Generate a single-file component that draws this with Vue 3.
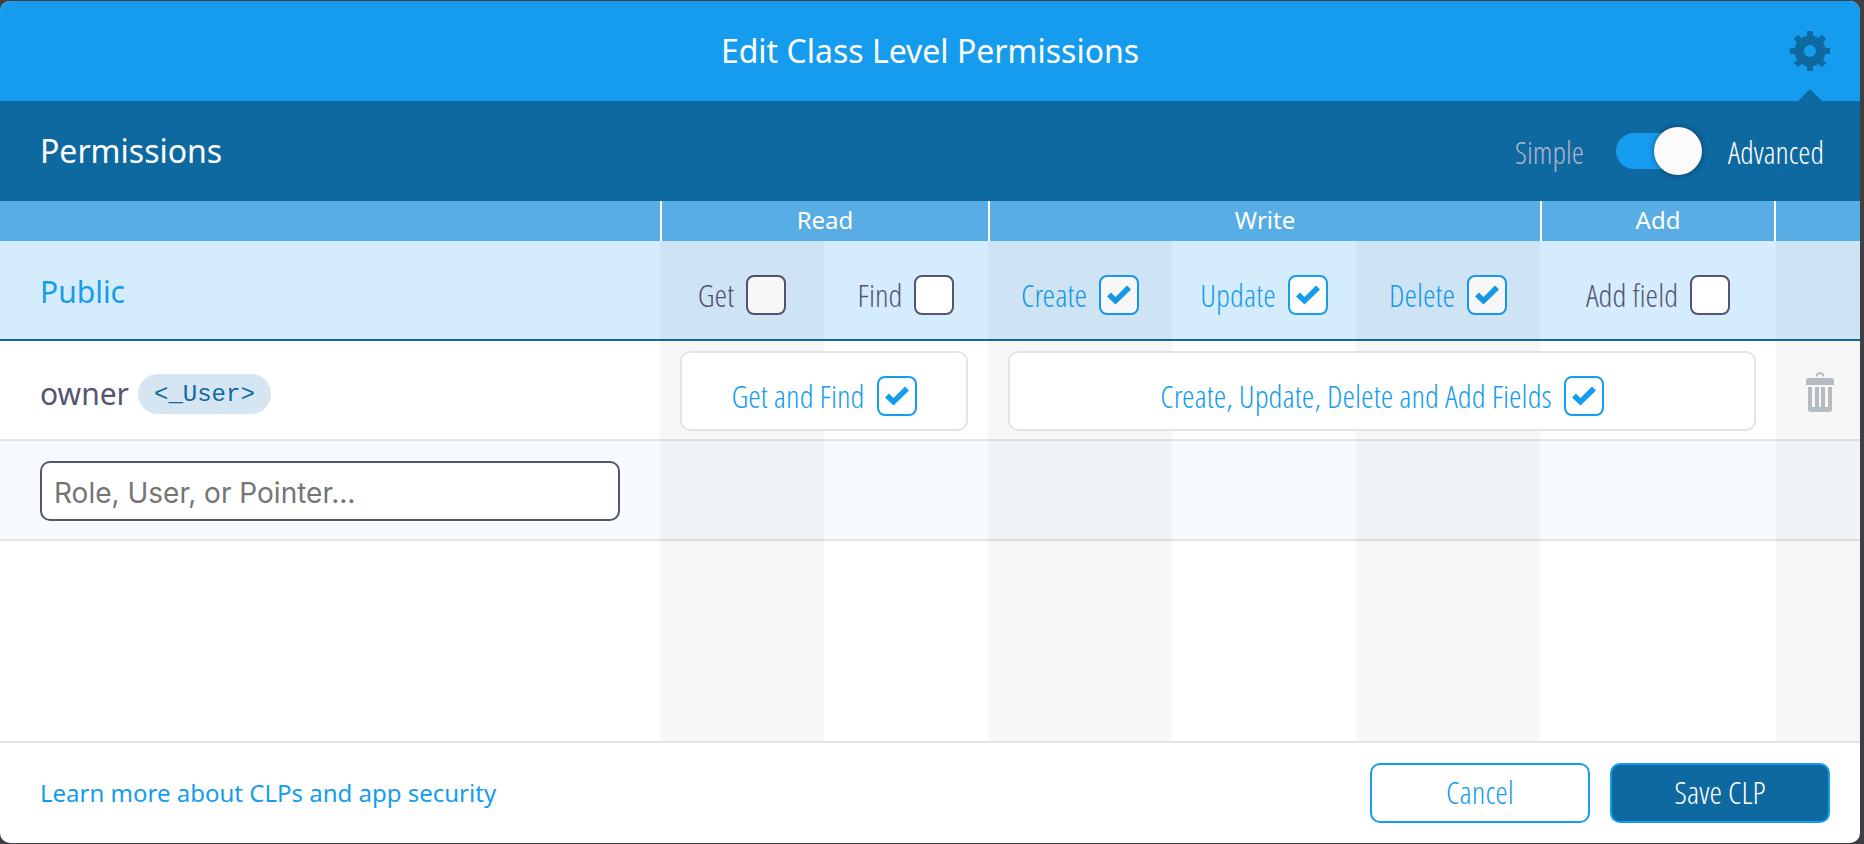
<script setup>
import { ref, reactive } from 'vue'

const advanced = ref(true)
const entry = ref('')
const publicPerms = reactive([
  { id: 'get', label: 'Get', on: false },
  { id: 'find', label: 'Find', on: false },
  { id: 'create', label: 'Create', on: true },
  { id: 'update', label: 'Update', on: true },
  { id: 'delete', label: 'Delete', on: true },
  { id: 'addField', label: 'Add field', on: false }
])
const pointerPerms = reactive([
  { id: 'read', label: 'Get and Find', span: 2, on: true },
  { id: 'write', label: 'Create, Update, Delete and Add Fields', span: 4, on: true }
])
</script>

<template>
  <div class="backdrop">
    <main class="modal" role="dialog" aria-labelledby="title">
      <header class="header">
        <h1 id="title">Edit Class Level Permissions</h1>
        <button class="gear" type="button" aria-label="Settings">
          <svg viewBox="0 0 40 40" width="40" height="40" aria-hidden="true">
            <g fill="#0e69a1">
              <rect x="17" y="0" width="6" height="40" />
              <rect x="17" y="0" width="6" height="40" transform="rotate(45 20 20)" />
              <rect x="17" y="0" width="6" height="40" transform="rotate(90 20 20)" />
              <rect x="17" y="0" width="6" height="40" transform="rotate(135 20 20)" />
              <circle cx="20" cy="20" r="15.5" />
            </g>
            <circle cx="20" cy="20" r="6" fill="#169cee" />
          </svg>
        </button>
      </header>

      <section class="settings">
        <h2>Permissions</h2>
        <label class="mode">
          <span class="simple">Simple</span>
          <input v-model="advanced" class="toggle" type="checkbox" role="switch" />
          <span>Advanced</span>
        </label>
      </section>

      <section class="body">
        <table>
          <colgroup>
            <col />
            <col class="narrow" span="2" />
            <col class="medium" span="3" />
            <col class="wide" />
            <col class="last" />
          </colgroup>
          <thead>
            <tr>
              <td></td>
              <th colspan="2" scope="colgroup">Read</th>
              <th colspan="3" scope="colgroup">Write</th>
              <th class="add" scope="col">Add</th>
              <td></td>
            </tr>
          </thead>
          <tbody>
            <tr class="public">
              <th scope="row">Public</th>
              <td v-for="p in publicPerms" :key="p.id">
                <label class="perm" :class="{ on: p.on }">
                  <span>{{ p.label }}</span>
                  <span class="box">
                    <input v-model="p.on" type="checkbox" />
                    <svg v-if="p.on" viewBox="0 0 40 40" aria-hidden="true"><path d="M8 21.500 12 17.500 16.500 22 28 10.500 32 14.500 16.500 29.500Z" /></svg>
                  </span>
                </label>
              </td>
              <td></td>
            </tr>
            <tr class="pointer">
              <th scope="row"><span class="owner">owner <code>&lt;_User&gt;</code></span></th>
              <td v-for="p in pointerPerms" :key="p.id" :colspan="p.span">
                <label class="perm group" :class="{ on: p.on }">
                  <span>{{ p.label }}</span>
                  <span class="box">
                    <input v-model="p.on" type="checkbox" />
                    <svg v-if="p.on" viewBox="0 0 40 40" aria-hidden="true"><path d="M8 21.500 12 17.500 16.500 22 28 10.500 32 14.500 16.500 29.500Z" /></svg>
                  </span>
                </label>
              </td>
              <td>
                <button class="trash" type="button" aria-label="Delete owner">
                  <svg viewBox="0 0 28 40" width="28" height="40" aria-hidden="true">
                    <path d="M10.500 4.500a3.500 3.500 0 0 1 7 0" fill="none" stroke="#bcc2c9" stroke-width="2" />
                    <path d="M0 8q0-2 2-2h24q2 0 2 2v5H0z" fill="#bcc2c9" />
                    <path d="M2 15h4v20h3V15h4v20h2V15h4v20h3V15h4v22q0 3-3 3H5q-3 0-3-3z" fill="#bcc2c9" />
                  </svg>
                </button>
              </td>
            </tr>
            <tr class="entry">
              <th scope="row">
                <input v-model="entry" type="text" placeholder="Role, User, or Pointer…" aria-label="Role, User, or Pointer" />
              </th>
              <td colspan="7"></td>
            </tr>
          </tbody>
        </table>
        <div class="stripes" aria-hidden="true">
          <i></i><i></i><i></i><i></i><i></i><i></i><i></i><i></i>
        </div>
      </section>

      <footer class="footer">
        <a href="#security">Learn more about CLPs and app security</a>
        <button class="btn" type="button">Cancel</button>
        <button class="btn primary" type="button">Save CLP</button>
      </footer>
    </main>
  </div>
</template>

<style>
body {
  margin: 0;
  background: #403e43;
}
</style>

<style scoped>
* {
  box-sizing: border-box;
}
.backdrop {
  display: flex;
  min-height: 100vh;
  padding: 1px 4px 1px 0;
  background: #403e43;
  font-family: "Noto Sans", "Open Sans", sans-serif;
  --narrow: "Open Sans Condensed Light", "Open Sans Condensed", "Liberation Sans", sans-serif;
}
.modal {
  flex: 1;
  display: flex;
  flex-direction: column;
  min-width: 0;
  overflow: hidden;
  border-radius: 10px;
  background: #fff;
}
.header {
  position: relative;
  display: flex;
  align-items: center;
  justify-content: center;
  height: 100px;
  background: #169cee;
  color: #fff;
}
.header::after {
  content: "";
  position: absolute;
  right: 38px;
  bottom: 0;
  border: 12px solid transparent;
  border-top: 0;
  border-bottom-color: #0e69a1;
}
h1,
h2 {
  margin: 0;
  font-size: 32px;
  line-height: 44px;
  font-weight: 400;
}
button {
  padding: 0;
  border: 0;
  background: none;
  cursor: pointer;
}
button svg {
  display: block;
}
.gear {
  position: absolute;
  top: 30px;
  right: 30px;
}
.settings {
  display: flex;
  align-items: center;
  justify-content: space-between;
  height: 100px;
  padding: 0 36px 0 40px;
  background: #0e69a1;
  color: #fff;
}
.mode {
  display: flex;
  align-items: center;
  gap: 32px;
  font: 300 31px/32px var(--narrow);
}
.mode span {
  padding-top: 2px;
}
.mode .simple {
  color: #b0b4c8;
}
.toggle {
  appearance: none;
  display: flex;
  align-items: center;
  justify-content: flex-end;
  width: 80px;
  height: 36px;
  margin: 0;
  border-radius: 18px;
  background: #169cee;
}
.toggle::before {
  content: "";
  flex: none;
  width: 48px;
  height: 48px;
  margin-right: -6px;
  border-radius: 50%;
  background: #fdfafb;
  box-shadow: 0 0 6px rgba(0, 0, 0, 0.4);
}
.body {
  position: relative;
  flex: 1;
  min-height: 540px;
}
table {
  width: 100%;
  table-layout: fixed;
  border-collapse: separate;
  border-spacing: 0;
}
.narrow {
  width: 164px;
}
.medium {
  width: 184px;
}
.wide {
  width: 236px;
}
.last {
  width: 84px;
}
th,
td {
  padding: 0;
  font-weight: 400;
}
thead tr {
  height: 40px;
  background: #57ade4;
  color: #fff;
  font-size: 24px;
  line-height: 32px;
}
thead th {
  padding-bottom: 2px;
  border-left: 2px solid #fff;
}
thead .add {
  border-right: 2px solid #fff;
}
tbody tr {
  height: 100px;
}
tbody th,
tbody td {
  border-bottom: 2px solid #e3e3ea;
}
tbody th {
  padding: 4px 40px 0;
  color: #555572;
  font-size: 30px;
  line-height: 40px;
  text-align: left;
}
.public {
  background: #d5ecfd;
}
.public th,
.public td {
  border-color: #0e69a1;
}
.public th {
  color: #169cee;
}
.perm {
  display: flex;
  align-items: center;
  justify-content: center;
  gap: 12px;
  padding-top: 10px;
  color: #555572;
  font: 300 32px/32px var(--narrow);
}
.perm.on {
  color: #169cee;
}
.group {
  position: relative;
  z-index: 2;
  height: 80px;
  margin: 10px 20px 8px;
  border: 2px solid #e3e3ea;
  border-radius: 10px;
  background: #fff;
}
.box {
  display: grid;
  width: 40px;
  height: 40px;
}
.box > * {
  grid-area: 1 / 1;
}
.box input {
  appearance: none;
  width: 40px;
  height: 40px;
  margin: 0;
  border: 2px solid currentColor;
  border-radius: 8px;
  background: #fff;
  color: inherit;
}
.box svg {
  fill: #169cee;
  pointer-events: none;
}
.pointer th {
  padding-top: 8px;
}
.owner {
  display: flex;
  align-items: center;
  gap: 9px;
}
code {
  padding: 2px 16px 0;
  border-radius: 20px;
  background: #d5e5f2;
  color: #0e69a1;
  font: 24px/38px "Liberation Mono", monospace;
}
.trash {
  display: block;
  margin: 4px auto 0 30px;
}
.entry {
  background: #f7fbff;
}
.entry th {
  padding-top: 2px;
}
.entry input {
  display: block;
  width: 100%;
  height: 60px;
  padding: 4px 12px 0;
  border: 2px solid #555572;
  border-radius: 10px;
  background: #fff;
  color: #555572;
  font: 28px/36px Inter, sans-serif;
}
.entry input::placeholder {
  color: #757575;
}
.stripes {
  position: absolute;
  inset: 40px 0 0;
  display: grid;
  grid-template-columns: 1fr 164px 164px 184px 184px 184px 236px 84px;
  pointer-events: none;
}
.stripes i:nth-child(2n) {
  background: rgba(0, 0, 0, 0.03);
}
.footer {
  display: flex;
  align-items: center;
  gap: 20px;
  height: 102px;
  padding: 0 30px 0 40px;
  border-top: 2px solid #e3e3ea;
}
.footer a {
  margin-right: auto;
  color: #169cee;
  font-size: 24px;
  line-height: 32px;
  text-decoration: none;
}
.btn {
  width: 220px;
  height: 60px;
  padding-bottom: 2px;
  border: 2px solid #169cee;
  border-radius: 10px;
  color: #169cee;
  font: 300 32px/32px var(--narrow);
}
.btn.primary {
  background: #0e69a1;
  color: #fff;
}
</style>
